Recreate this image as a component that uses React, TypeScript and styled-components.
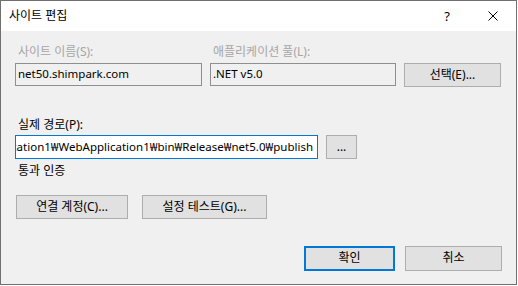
import React from 'react';
import styled, { createGlobalStyle } from 'styled-components';

const GlobalStyle = createGlobalStyle`
  html, body {
    margin: 0;
    padding: 0;
    background: #ffffff;
  }
  body {
    font-family: "Noto Sans", "Noto Sans CJK KR", sans-serif;
    font-size: 12px;
    color: #000000;
  }
`;

const Window = styled.div`
  box-sizing: border-box;
  width: 517px;
  height: 285px;
  border: 1px solid #707070;
  background: #f0f0f0;
  display: flex;
  flex-direction: column;
`;

const TitleBar = styled.div`
  height: 30px;
  background: #ffffff;
  display: flex;
  align-items: center;
  padding-left: 8px;
  flex-shrink: 0;
`;

const Title = styled.span`
  flex: 1;
  font-size: 12px;
  line-height: 16px;
  margin-top: -1px;
`;

const TitleButton = styled.div`
  width: 46px;
  height: 30px;
  display: flex;
  align-items: center;
  justify-content: center;
  font-size: 13px;
`;

const Body = styled.div`
  flex: 1;
  display: flex;
  flex-direction: column;
  padding: 13px 14px 0 14px;
`;

const TopGrid = styled.div`
  display: grid;
  grid-template-columns: 187px 186px 97px;
  column-gap: 8px;
  row-gap: 3px;
  align-items: start;
`;

const Label = styled.div<{ $disabled?: boolean }>`
  font-size: 12px;
  line-height: 16px;
  height: 16px;
  padding-left: 3px;
  white-space: nowrap;
  color: ${p => (p.$disabled ? '#a6a6a6' : '#000000')};
`;

const TextBox = styled.div<{ $focused?: boolean; $readOnly?: boolean }>`
  box-sizing: border-box;
  height: ${p => (p.$focused ? 24 : 23)}px;
  border: 1px solid ${p => (p.$focused ? '#0078d7' : '#8f8f8f')};
  background: ${p => (p.$readOnly ? '#f0f0f0' : '#ffffff')};
  display: flex;
  align-items: center;
  justify-content: ${p => (p.$focused ? 'flex-end' : 'flex-start')};
  overflow: hidden;
  padding: 0 ${p => (p.$focused ? 4 : 2)}px 1px 2px;
  white-space: nowrap;
  font-size: 11.5px;
  line-height: 16px;
`;

const Button = styled.button<{ $width: number; $height?: number; $default?: boolean }>`
  box-sizing: border-box;
  width: ${p => p.$width}px;
  height: ${p => p.$height ?? 24}px;
  margin: 0;
  padding: 0 0 1px 0;
  border: ${p => (p.$default ? '2px solid #0078d7' : '1px solid #adadad')};
  background: #e1e1e1;
  font-family: "Noto Sans", "Noto Sans CJK KR", sans-serif;
  font-size: 12px;
  line-height: 16px;
  color: #000000;
  white-space: nowrap;
`;

const PathSection = styled.div`
  margin-top: 30px;
  display: flex;
  flex-direction: column;
  gap: 2px;
`;

const PathRow = styled.div`
  display: flex;
  align-items: flex-start;
  gap: 8px;
`;

const PathBox = styled(TextBox)`
  width: 303px;
`;

const SectionLabel = styled(Label)`
  margin-top: 4px;
`;

const ActionRow = styled.div`
  margin-top: 16px;
  display: flex;
  gap: 14px;
  padding-left: 1px;
`;

const Footer = styled.div`
  margin-top: 27px;
  display: flex;
  justify-content: flex-end;
  gap: 10px;
`;

const path =
  'C:₩Users₩shimpark₩source₩repos₩WebApplication1₩WebApplication1₩bin₩Release₩net5.0₩publish';

export default function App() {
  return (
    <>
      <GlobalStyle />
      <Window>
        <TitleBar>
          <Title>사이트 편집</Title>
          <TitleButton>?</TitleButton>
          <TitleButton>
            <svg width="10" height="10" viewBox="0 0 10 10">
              <path d="M0.5 0.5 L9.5 9.5 M9.5 0.5 L0.5 9.5" stroke="#000" strokeWidth="1" />
            </svg>
          </TitleButton>
        </TitleBar>
        <Body>
          <TopGrid>
            <Label $disabled>사이트 이름(S):</Label>
            <Label $disabled>애플리케이션 풀(L):</Label>
            <div />
            <TextBox $readOnly>net50.shimpark.com</TextBox>
            <TextBox $readOnly>.NET v5.0</TextBox>
            <Button $width={97}>선택(E)...</Button>
          </TopGrid>
          <PathSection>
            <Label>실제 경로(P):</Label>
            <PathRow>
              <PathBox $focused>{path}</PathBox>
              <Button $width={31}>...</Button>
            </PathRow>
          </PathSection>
          <SectionLabel>통과 인증</SectionLabel>
          <ActionRow>
            <Button $width={112}>연결 계정(C)...</Button>
            <Button $width={125}>설정 테스트(G)...</Button>
          </ActionRow>
          <Footer>
            <Button $width={91} $height={25} $default>확인</Button>
            <Button $width={97} $height={25}>취소</Button>
          </Footer>
        </Body>
      </Window>
    </>
  );
}
